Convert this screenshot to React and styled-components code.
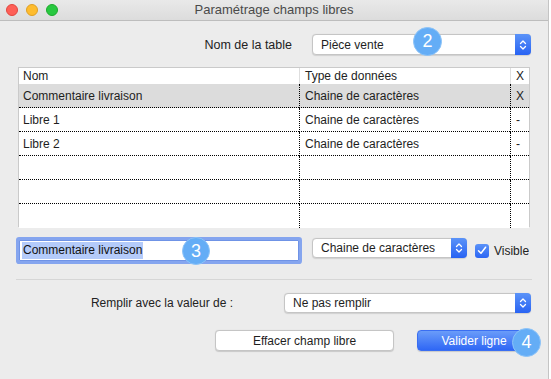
import React from "react";
import styled, { createGlobalStyle } from "styled-components";

const Global = createGlobalStyle`
  html, body { margin: 0; padding: 0; background: #ffffff; }
  body { font-family: "Liberation Sans", Arial, sans-serif; color: #1e1e1e; }
  * { box-sizing: border-box; }
`;

const Window = styled.div`
  width: 549px;
  height: 379px;
  background: #ececec;
  border-right: 1px solid #c4c4c4;
  display: flex;
  flex-direction: column;
  overflow: hidden;
`;

const TitleBar = styled.div`
  height: 21px;
  flex: none;
  border-bottom: 1px solid #bdbdbd;
  background: linear-gradient(#e9e9e9, #dcdcdc);
  display: grid;
  grid-template-columns: 1fr auto 1fr;
  align-items: center;
`;

const Lights = styled.div`
  display: flex;
  gap: 8px;
  padding-left: 6px;
`;

const Light = styled.span`
  width: 12px;
  height: 12px;
  border-radius: 50%;
  background: ${(p) => p.$bg};
  border: 1px solid ${(p) => p.$bd};
`;

const Title = styled.div`
  font-size: 13px;
  color: #4a4a4a;
  line-height: 20px;
`;

const Content = styled.div`
  flex: 1;
  display: flex;
  flex-direction: column;
  padding: 0 16px;
`;

const Row = styled.div`
  display: flex;
  align-items: center;
  justify-content: ${(p) => p.$justify || "flex-start"};
  gap: ${(p) => p.$gap || 0}px;
  margin-top: ${(p) => p.$top || 0}px;
  margin-left: ${(p) => p.$left || 0}px;
  padding-right: ${(p) => p.$right || 0}px;
`;

const Label = styled.span`
  font-size: ${(p) => p.$size || 12}px;
  color: #222;
`;

const SelectBox = styled.div`
  position: relative;
  width: ${(p) => p.$w}px;
  height: ${(p) => p.$h || 20}px;
  flex: none;
  background: #fff;
  border: 1px solid #c5c5c5;
  border-radius: 4px;
  box-shadow: 0 0.5px 1px rgba(0, 0, 0, 0.12);
  display: flex;
  align-items: center;
  margin-bottom: ${(p) => p.$mb || 0}px;
`;

const SelectText = styled.span`
  flex: 1;
  font-size: 12px;
  padding-left: 8px;
  color: #1e1e1e;
  white-space: nowrap;
`;

const Arrow = styled.span`
  width: 16px;
  align-self: stretch;
  margin: -1px -1px -1px 0;
  border-radius: 0 4px 4px 0;
  background: linear-gradient(#5b93f8, #2863f3);
  display: flex;
  align-items: center;
  justify-content: center;
`;

const Badge = styled.span`
  position: absolute;
  left: ${(p) => p.$x}px;
  top: ${(p) => p.$y}px;
  width: ${(p) => p.$d}px;
  height: ${(p) => p.$d}px;
  border-radius: 50%;
  background: #64adf6;
  border: 1px solid #8cc3f8;
  color: #fff;
  font-size: 18px;
  display: flex;
  align-items: center;
  justify-content: center;
  z-index: 2;
`;

const Table = styled.div`
  margin: 12px 2px 0;
  height: 160px;
  background: #fff;
  border: 1px solid #cacaca;
  display: grid;
  grid-template-columns: 280px 211px 1fr;
  grid-template-rows: 16px repeat(6, 24px);
`;

const HeadCell = styled.div`
  font-size: 12px;
  line-height: 16px;
  padding-left: ${(p) => p.$pl || 4}px;
  border-left: ${(p) => (p.$first ? "none" : "1px solid #dedede")};
  color: #222;
`;

const Cell = styled.div`
  font-size: 12px;
  display: flex;
  align-items: center;
  padding-left: ${(p) => p.$pl || 4}px;
  background: ${(p) => (p.$sel ? "#dcdcdc" : "#fff")};
  border-bottom: ${(p) => (p.$last ? "none" : "1px dotted #000")};
  border-left: ${(p) => (p.$first ? "none" : "1px dotted #000")};
  color: #1e1e1e;
  padding-bottom: ${(p) => (p.$last ? 1 : 0)}px;
`;

const Field = styled.div`
  position: relative;
  width: 280px;
  height: 21px;
  margin: 3px;
  flex: none;
  background: #fff;
  border: 1px solid #6f93e6;
  border-radius: 1px;
  box-shadow: 0 0 0 3px #85a5ef;
  display: flex;
  align-items: center;
  padding-left: 2px;
`;

const Selected = styled.span`
  font-size: 12px;
  background: #b4cbfa;
  line-height: 17px;
  padding: 0 1px;
  color: #111;
`;

const Check = styled.span`
  width: 14px;
  height: 14px;
  border-radius: 3px;
  background: linear-gradient(#5a92f8, #2c66f4);
  display: flex;
  align-items: center;
  justify-content: center;
  margin-left: 8px;
  margin-right: 5px;
`;

const Separator = styled.div`
  margin-top: 15px;
  height: 1px;
  background: #d6d6d6;
`;

const Button = styled.div`
  position: relative;
  width: ${(p) => p.$w}px;
  height: 21px;
  border-radius: 4px;
  font-size: 12px;
  display: flex;
  align-items: center;
  justify-content: center;
  background: ${(p) => (p.$primary ? "linear-gradient(#6a9cf9, #2f67f5)" : "#fff")};
  color: ${(p) => (p.$primary ? "#fff" : "#1e1e1e")};
  border: 1px solid ${(p) => (p.$primary ? "#3a6ef2" : "#c5c5c5")};
  box-shadow: 0 0.5px 1px rgba(0, 0, 0, 0.15);
`;

const Chevrons = () => (
  <svg width="8" height="12" viewBox="0 0 8 12">
    <path d="M1.5 4.5 L4 2 L6.5 4.5 M1.5 7.5 L4 10 L6.5 7.5" fill="none" stroke="#fff" strokeWidth="1.3" strokeLinecap="round" strokeLinejoin="round" />
  </svg>
);

const Select = ({ w, h, text, mb, children }) => (
  <SelectBox $w={w} $h={h} $mb={mb}>
    <SelectText>{text}</SelectText>
    <Arrow>
      <Chevrons />
    </Arrow>
    {children}
  </SelectBox>
);

const rows = [
  ["Commentaire livraison", "Chaine de caractères", "X", true],
  ["Libre 1", "Chaine de caractères", "-"],
  ["Libre 2", "Chaine de caractères", "-"],
  ["", "", ""],
  ["", "", ""],
  ["", "", ""],
];

export default function App() {
  return (
    <>
      <Global />
      <Window>
        <TitleBar>
          <Lights>
            <Light $bg="#fe5f57" $bd="#e2463f" />
            <Light $bg="#febc2e" $bd="#dfa023" />
            <Light $bg="#28c840" $bd="#1dab2c" />
          </Lights>
          <Title>Paramétrage champs libres</Title>
          <span />
        </TitleBar>
        <Content>
          <Row $justify="flex-end" $gap={20} $top={13} $right={1}>
            <Label $size={12.5}>Nom de la table</Label>
            <Select w={219} h={21} text="Pièce vente">
              <Badge $x={100} $y={-8} $d={29}>2</Badge>
            </Select>
          </Row>
          <Table>
            <HeadCell $first>Nom</HeadCell>
            <HeadCell $pl={5}>Type de données</HeadCell>
            <HeadCell $pl={5}>X</HeadCell>
            {rows.map((r, i) => (
              <React.Fragment key={i}>
                <Cell $first $sel={r[3]} $last={i === rows.length - 1}>{r[0]}</Cell>
                <Cell $sel={r[3]} $last={i === rows.length - 1} $pl={5}>{r[1]}</Cell>
                <Cell $sel={r[3]} $last={i === rows.length - 1} $pl={5}>{r[2]}</Cell>
              </React.Fragment>
            ))}
          </Table>
          <Row $top={10}>
            <Field>
              <Selected>Commentaire livraison</Selected>
              <Badge $x={162} $y={-4} $d={28}>3</Badge>
            </Field>
            <Row $left={10}>
              <Select w={155} text="Chaine de caractères" mb={5} />
              <Check>
                <svg width="10" height="9" viewBox="0 0 10 9">
                  <path d="M1.5 4.8 L4 7.3 L8.6 1.2" fill="none" stroke="#fff" strokeWidth="1.5" strokeLinecap="round" strokeLinejoin="round" />
                </svg>
              </Check>
              <Label>Visible</Label>
            </Row>
          </Row>
          <Separator />
          <Row $justify="flex-end" $gap={51} $top={13} $right={1}>
            <Label>Remplir avec la valeur de :</Label>
            <Select w={247} text="Ne pas remplir" />
          </Row>
          <Row $justify="flex-end" $gap={23} $top={17} $right={1}>
            <Button $w={179}>Effacer champ libre</Button>
            <Button $w={114} $primary>
              Valider ligne
              <Badge $x={94} $y={-3} $d={29}>4</Badge>
            </Button>
          </Row>
        </Content>
      </Window>
    </>
  );
}
